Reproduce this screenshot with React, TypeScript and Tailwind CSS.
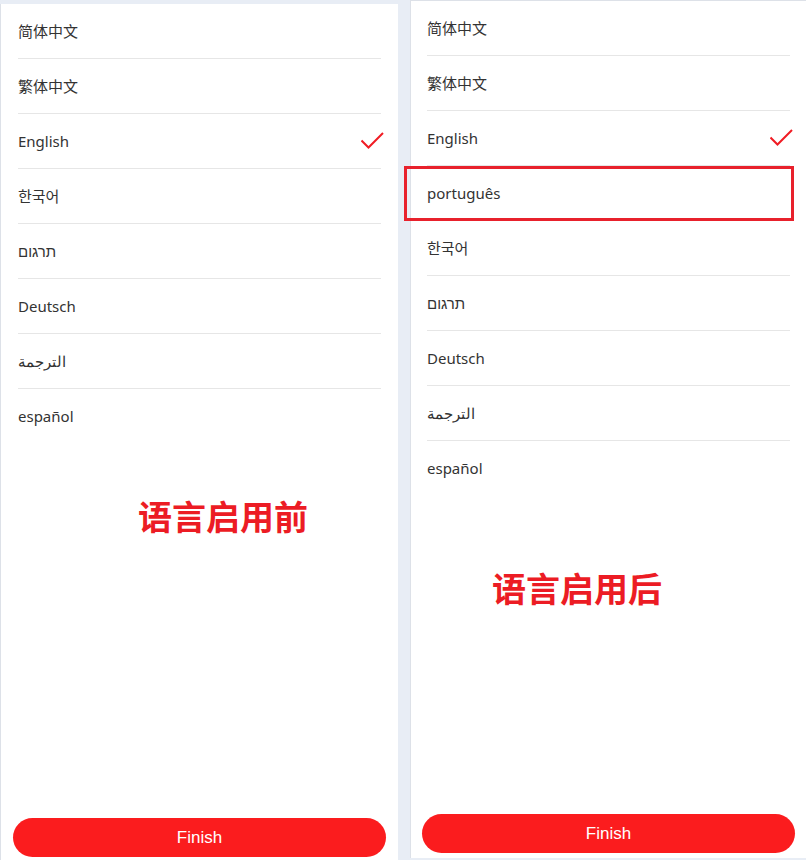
import React from "react";

const before = ["简体中文", "繁体中文", "English", "한국어", "תרגום", "Deutsch", "الترجمة", "español"];
const after = ["简体中文", "繁体中文", "English", "português", "한국어", "תרגום", "Deutsch", "الترجمة", "español"];

function Check() {
  return (
    <svg width="23" height="18" viewBox="0 0 23 18" className="-mr-[3px]">
      <polyline points="0.5,8.5 7.5,15.5 22,1" fill="none" stroke="#f01c24" strokeWidth="2" />
    </svg>
  );
}

function LangList({ items, pad }: { items: string[]; pad: string }) {
  return (
    <ul className={pad}>
      {items.map((name, i) => (
        <li
          key={name}
          className={`flex h-[55px] items-center justify-between ${i < items.length - 1 ? "border-b border-[#e6e6e6]" : ""}`}
        >
          <span className="text-[15px] text-[#333]">{name}</span>
          {name === "English" && <Check />}
        </li>
      ))}
    </ul>
  );
}

function FinishButton({ className }: { className: string }) {
  return (
    <button
      className={`h-[39px] rounded-full bg-[#fb1c1e] text-[17px] text-white ${className}`}
      style={{ fontFamily: '"Liberation Sans", Arial, sans-serif' }}
    >
      Finish
    </button>
  );
}

export default function App() {
  return (
    <div
      className="flex h-[860px] w-[806px] overflow-hidden bg-[#e8edf5]"
      style={{ fontFamily: '"Noto Sans", "Noto Sans CJK SC", sans-serif' }}
    >
      {/* before */}
      <div className="mt-[4px] flex h-[856px] w-[398px] flex-col border-l border-[#dde1e8] bg-white">
        <LangList items={before} pad="pl-[17px] pr-[17px]" />
        <div className="mt-[53px] pl-[137px] text-[34px] font-bold leading-[40px] text-[#ec1c24]">语言启用前</div>
        <div className="flex-1" />
        <FinishButton className="mb-[3px] ml-[12px] mr-[12px]" />
      </div>

      {/* after */}
      <div className="relative ml-[12px] flex h-[858px] w-[396px] flex-col border-l border-t border-[#dde1e8] bg-white">
        <LangList items={after} pad="pl-[16px] pr-[16px]" />
        <div className="mt-[73px] pl-[81px] text-[34px] font-bold leading-[40px] text-[#ec1c24]">语言启用后</div>
        <div className="flex-1" />
        <FinishButton className="mb-[5px] ml-[11px] mr-[11px]" />
        <div className="absolute left-[-7px] top-[165px] h-[55px] w-[390px] border-[3px] border-[#e8212c]" />
      </div>
    </div>
  );
}
